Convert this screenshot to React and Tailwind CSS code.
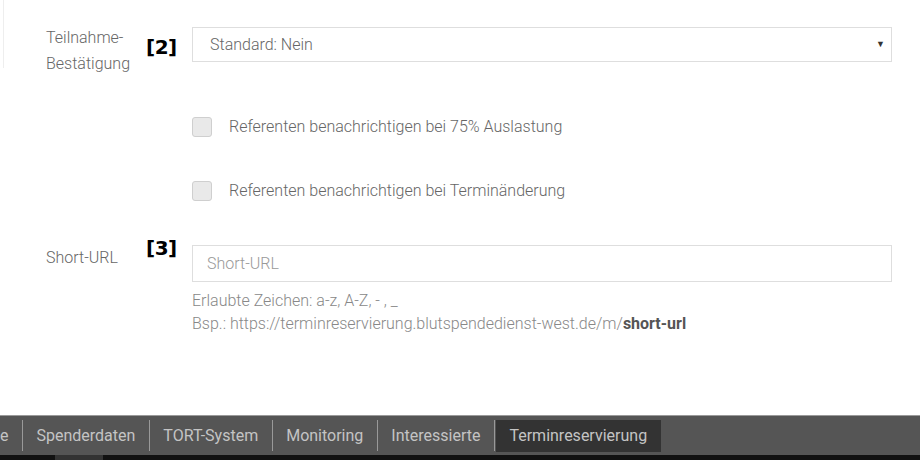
import { useState } from 'react';

const TABS = ['e', 'Spenderdaten', 'TORT-System', 'Monitoring', 'Interessierte', 'Terminreservierung'];

function Marker({ children }) {
  return (
    <span className="font-['DejaVu_Sans',sans-serif] text-[20px] font-bold leading-[20px] tracking-tight text-black">
      {children}
    </span>
  );
}

function Checkbox({ label }) {
  const [checked, setChecked] = useState(false);
  return (
    <label className="flex h-[24px] items-center gap-[17px]">
      <button
        type="button"
        onClick={() => setChecked(!checked)}
        className="h-[20px] w-[20px] rounded-[3px] border border-[#cfcfcf] bg-[#e9e9e9]"
      />
      <span className="text-[16px] leading-[24px] text-[#666]">{label}</span>
    </label>
  );
}

export default function App() {
  return (
    <div className="relative flex h-[460px] w-[920px] flex-col overflow-hidden bg-white font-['Roboto',sans-serif] font-light">
      <div className="absolute left-[3px] top-0 h-[68px] w-px bg-[#eee]" />

      <div className="pl-[46px] pr-[28px] pt-[25px]">
        {/* Teilnahme-Bestätigung */}
        <div className="flex">
          <div className="w-[100px] text-[16px] leading-[26px] text-[#666]">
            Teilnahme-
            <br />
            Bestätigung
          </div>
          <div className="w-[46px] pt-[12px]">
            <Marker>[2]</Marker>
          </div>
          <div className="mt-[2px] flex h-[35px] flex-1 items-center justify-between border border-[#dedede] pl-[17px] pr-[6px]">
            <span className="text-[16px] text-[#666]">Standard: Nein</span>
            <span className="text-[9px] text-[#333]">▼</span>
          </div>
        </div>

        {/* Checkboxes */}
        <div className="ml-[146px] mt-[38px] flex flex-col gap-[40px]">
          <Checkbox label="Referenten benachrichtigen bei 75% Auslastung" />
          <Checkbox label="Referenten benachrichtigen bei Terminänderung" />
        </div>

        {/* Short-URL */}
        <div className="mt-[42px] flex">
          <div className="w-[100px] text-[16px] leading-[26px] text-[#666]">Short-URL</div>
          <div className="-mt-[7px] w-[46px]">
            <Marker>[3]</Marker>
          </div>
          <div className="flex-1">
            <div className="flex h-[37px] items-center border border-[#dedede] pl-[14px]">
              <span className="text-[16px] text-[#999]">Short-URL</span>
            </div>
            <div className="mt-[7px] text-[16px] leading-[23px] text-[#888]">
              <div>Erlaubte Zeichen: a-z, A-Z, - , _</div>
              <div>
                Bsp.: https://terminreservierung.blutspendedienst-west.de/m/
                <span className="font-bold text-[#555]">short-url</span>
              </div>
            </div>
          </div>
        </div>
      </div>

      {/* Bottom navigation */}
      <div className="mt-auto">
        <div className="flex h-[40px] items-center border-t border-[#9a9a9a] bg-[#555]">
          {TABS.map((tab, i) => {
            const active = tab === 'Terminreservierung';
            return (
              <div key={tab} className="flex items-center">
                {i > 0 && <div className="h-[31px] w-px bg-[#999]" />}
                <div
                  className={`flex h-[32px] items-center text-[16px] font-normal text-[#c4c4c4] ${
                    i === 0 ? 'pr-[13.5px]' : 'px-[13.5px]'
                  } ${active ? 'ml-[1px] bg-[#333]' : ''}`}
                >
                  {tab}
                </div>
              </div>
            );
          })}
        </div>
        <div className="flex h-[5px] bg-[#111]">
          <div className="ml-[55px] w-[48px] bg-[#333]" />
        </div>
      </div>
    </div>
  );
}
